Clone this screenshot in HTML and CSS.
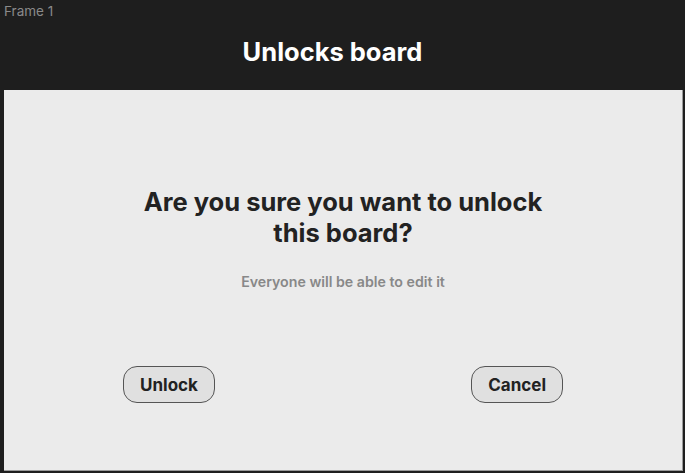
FILE: index.html
```html
<!DOCTYPE html>
<html>
<head>
<meta charset="utf-8">
<link rel="stylesheet" href="styles.css">
</head>
<body>
<div class="frame-label">Frame 1</div>
<header class="topbar"><h1 class="title">Unlocks board</h1></header>
<main class="panel">
  <h2 class="question">Are you sure you want to unlock this board?</h2>
  <p class="note">Everyone will be able to edit it</p>
  <div class="actions">
    <button class="btn">Unlock</button>
    <button class="btn">Cancel</button>
  </div>
</main>
</body>
</html>
```
FILE: styles.css
```css
html, body {
  margin: 0;
  padding: 0;
  height: 100%;
}
body {
  background: #1e1e1e;
  font-family: Inter, "Liberation Sans", sans-serif;
  width: 685px;
  height: 473px;
  overflow: hidden;
}
.frame-label {
  font-size: 13.5px;
  line-height: 16px;
  color: #8a8a8a;
  padding: 3px 0 0 4px;
  height: 18px;
  box-sizing: border-box;
}
.topbar {
  height: 72px;
  display: flex;
  justify-content: center;
  padding-right: 20px;
}
.title {
  margin: 20px 0 0 0;
  font-size: 25.5px;
  line-height: 28px;
  font-weight: 700;
  color: #ffffff;
}
.panel {
  margin-left: 4px;
  width: 679px;
  height: 381px;
  box-sizing: border-box;
  background: #ebebeb;
  border-right: 1px solid #9a9a9a;
  border-bottom: 1px solid #9a9a9a;
  display: flex;
  flex-direction: column;
  align-items: center;
  padding-top: 96px;
}
.question {
  margin: 0;
  width: 440px;
  text-align: center;
  font-size: 25.5px;
  line-height: 31px;
  font-weight: 700;
  color: #222222;
}
.note {
  margin: 26px 0 0 0;
  font-size: 14.2px;
  line-height: 16px;
  font-weight: 600;
  color: #888888;
}
.actions {
  margin-top: 76px;
  width: 440px;
  display: flex;
  justify-content: space-between;
}
.btn {
  font-family: inherit;
  font-size: 17px;
  font-weight: 700;
  color: #222222;
  background: #e0e0e0;
  border: 1px solid #555555;
  border-radius: 14px;
  height: 37px;
  padding: 0 16px;
}
```
